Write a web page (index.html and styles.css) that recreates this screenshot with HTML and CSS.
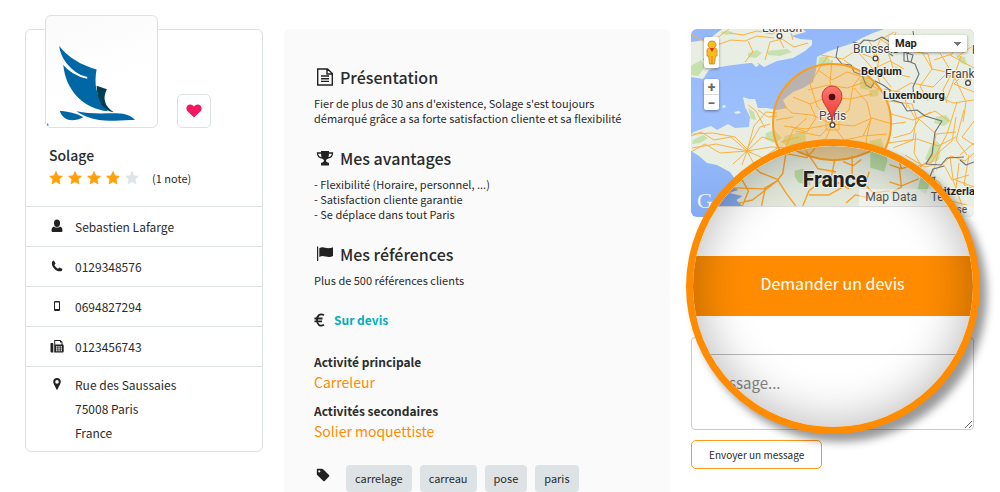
FILE: index.html
```html
<!DOCTYPE html>
<html lang="fr">
<head>
<meta charset="utf-8">
<meta name="viewport" content="width=device-width, initial-scale=1">
<title>Solage</title>
<link rel="stylesheet" href="styles.css">
</head>
<body>
<main class="page">
  <section class="card">
    <header class="card-head">
      <div class="brand">
        <div class="logo">
          <svg viewBox="0 0 113 113" role="img" aria-label="Solage">
            <path fill="#0067a6" d="M13.500 30.500C22 42 36 50 51.500 54.500C49 68 50 82 63 97C38 94 20 76 17.500 49C24 57 32 61 41 63C27 57 15 45 13.500 30.500Z"/>
            <path fill="none" stroke="#fff" stroke-width="2" d="M16 47C24 56 31 61 42 63"/>
            <path fill="#0067a6" d="M31 97C44 100 59 99 72 99C81 99 88 102 90.500 106C80 105 68 108 54 106C44 104 37 101 31 97ZM14 96.500C22 97 31 99 38 103C30 107 18 109 14 96.500Z"/>
            <path fill="#003e52" d="M51.500 71L62 74.500C57 84 60 92 69 98C59 97 52 88 51.500 71Z"/>
            <path fill="#2d8bc3" d="M1 109l2 2-2 1z"/>
          </svg>
        </div>
        <button class="like" type="button" aria-label="Ajouter aux favoris">
          <svg viewBox="0 0 16 14" width="16" height="14"><path fill="#f2185f" d="M8 13.500L1.500 7.300C-.8 4.800.6.6 4.200.6C6 .6 7.300 1.600 8 2.800C8.700 1.600 10 .6 11.800.6C15.400.6 16.800 4.800 14.500 7.300Z"/></svg>
        </button>
      </div>
      <h1 class="name">Solage</h1>
      <div class="rating">
        <svg class="stars" viewBox="0 0 90 14" width="90" height="14" role="img" aria-label="4 sur 5">
          <defs><path id="star" d="M7 .6l1.900 4.200 4.500.5-3.400 3 1 4.600L7 10.600l-4 2.300 1-4.600-3.400-3 4.500-.5z" stroke-width=".8" stroke-linejoin="round"/></defs>
          <g fill="#ff9f0a" stroke="#ff9f0a"><use href="#star"/><use href="#star" x="19"/><use href="#star" x="38"/><use href="#star" x="57"/></g>
          <use href="#star" x="76" fill="#dfe3e6" stroke="#dfe3e6"/>
        </svg>
        <span class="votes">(1 note)</span>
      </div>
    </header>
    <ul class="contact">
      <li><svg viewBox="0 0 14 14"><ellipse cx="7" cy="4.200" rx="3" ry="3.700"/><path d="M4 7.400C1.800 8 1.500 10 1.500 11.500C1.500 12.500 2.200 13 3 13H11C11.800 13 12.500 12.500 12.500 11.500C12.500 10 12.200 8 10 7.400C8.500 9 5.500 9 4 7.400Z"/></svg><span>Sebastien Lafarge</span></li>
      <li><svg viewBox="0 0 14 14"><path d="M2.200 2.400L3.800 1.600L5.600 4.600L4.400 6C5 7.400 6.400 8.900 8 9.700L9.400 8.500L12.500 10.100L11.700 12C7 14 .2 7.400 2.200 2.400Z"/></svg><span>0129348576</span></li>
      <li><svg viewBox="0 0 14 14"><path fill-rule="evenodd" d="M5 2H9Q10 2 10 3V11Q10 12 9 12H5Q4 12 4 11V3Q4 2 5 2ZM5 3.500V10H9V3.500Z"/></svg><span>0694827294</span></li>
      <li><svg viewBox="0 0 14 14"><path fill-rule="evenodd" d="M1 4H2.500Q3.300 4 3.300 4.800V13.500H1.500Q.5 13.500.5 12.500V5Q.5 4 1 4ZM4.200 1H10.500L12.500 3V5.300Q13.700 5.500 13.700 6.500V12.500Q13.700 13.500 12.700 13.500H4.200ZM5.200 2V5.500H11.500V3.500H10V2ZM6 7.200V8.400H7.500V7.200ZM8.300 7.200V8.400H9.800V7.200ZM10.600 7.200V8.400H12V7.200ZM6 9.200V10.400H7.500V9.200ZM8.300 9.200V10.400H9.800V9.200ZM10.600 9.200V10.400H12V9.200ZM6 11.200V12.300H7.500V11.200ZM8.300 11.200V12.300H9.800V11.200ZM10.600 11.200V12.300H12V11.200Z"/></svg><span>0123456743</span></li>
      <li class="address"><svg viewBox="0 0 14 14"><path fill-rule="evenodd" d="M7 1C4.700 1 3.200 2.700 3.200 4.800C3.200 7 5 8.600 6.200 12Q7 13.500 7.800 12C9 8.600 10.800 7 10.800 4.800C10.800 2.700 9.300 1 7 1ZM7 3.100A1.800 1.800 0 1 1 7 6.700A1.800 1.800 0 1 1 7 3.100Z"/></svg><span>Rue des Saussaies<br>75008 Paris<br>France</span></li>
    </ul>
  </section>

  <article class="about">
    <section class="block">
      <h2><svg viewBox="0 0 18 18"><path fill="none" stroke="#222" stroke-width="1.400" d="M1.700 1H11.500L16.300 5.500V17H1.700ZM11 1V6H16M5 8H13M5 10.700H13M5 13.400H13"/></svg>Présentation</h2>
      <p>Fier de plus de 30 ans d'existence, Solage s'est toujours<br>démarqué grâce a sa forte satisfaction cliente et sa flexibilité</p>
    </section>
    <section class="block">
      <h2><svg viewBox="0 0 18 18"><path d="M5 2H13V4C13 8 12 10 10 11C10 13 11 13.200 13 14V16.500H5V14C7 13.200 8 13 8 11C6 10 5 8 5 4Z"/><path fill="none" stroke="#222" stroke-width="1.300" d="M5 4H1.500C1.500 7 3.500 9 7 9M13 4H16.500C16.500 7 14.500 9 11 9"/></svg>Mes avantages</h2>
      <p>- Flexibilité (Horaire, personnel, ...)<br>- Satisfaction cliente garantie<br>- Se déplace dans tout Paris</p>
    </section>
    <section class="block">
      <h2><svg viewBox="0 0 18 18"><path d="M1 1.500H2.200V16H1ZM3.300 3.200C8 .5 10 5 17 2.300V11C11 14 8 9 3.300 12Z"/></svg>Mes références</h2>
      <p>Plus de 500 références clients</p>
    </section>
    <p class="price"><svg viewBox="0 0 12 14" width="12" height="14"><path fill="none" stroke="#222" stroke-width="1.800" d="M10 2.200C6 0 3 2.500 3 7C3 11.500 6 14 10 11.800M.5 5.500H8.500M.5 8.300H8"/></svg><span>Sur devis</span></p>
    <dl class="jobs">
      <dt>Activité principale</dt><dd>Carreleur</dd>
      <dt>Activités secondaires</dt><dd>Solier moquettiste</dd>
    </dl>
    <div class="tags">
      <svg viewBox="0 0 14 14" width="14" height="14" aria-hidden="true"><path fill-rule="evenodd" d="M.8 1.500Q.8.800 1.500.800H6Q6.600.8 7.100 1.300L13 7Q13.700 7.700 13 8.400L8.700 12.900Q8 13.500 7.300 12.900L1.400 7.200Q.8 6.700.8 6ZM3.300 2.200A1.100 1.100 0 1 0 3.310 2.200Z"/></svg>
      <ul><li>carrelage</li><li>carreau</li><li>pose</li><li>paris</li></ul>
    </div>
  </article>

  <aside class="side">
    <div class="map">
      <svg class="map-art" viewBox="691 29 283 188" preserveAspectRatio="xMidYMid slice" role="img" aria-label="Carte de France">
        <defs>
          <linearGradient id="pin" x1="0" y1="0" x2="0" y2="1"><stop offset="0" stop-color="#ff776d"/><stop offset="1" stop-color="#e8352e"/></linearGradient>
          <linearGradient id="sea" x1="0" y1="0" x2="0" y2="1"><stop offset="0" stop-color="#93b7f8"/><stop offset=".5" stop-color="#9dc0fd"/><stop offset="1" stop-color="#84abf2"/></linearGradient>
        </defs>
        <rect x="691" y="29" width="283" height="188" fill="url(#sea)"/>
        <g fill="#e8eee3">
          <path d="M691 42L705 40L713 36L722 29H803L806 32L791 36L800 39L812 40L812 45L805 51L793 58L777 61L764 67L758 63L750 63L733 65L720 67L709 70L703 79L691 77Z"/>
          <path d="M974 29H884L873 33L862 38L853 43L838 48L827 52L817 57L816 70L813 82L803 88L793 92L783 100L787 108L777 110L767 108L758 108L755 99L749 99L743 97L745 107L750 117L749 127L735 128L728 124L717 130L711 126L705 128L693 132L691 136V151L699 156L707 163L717 165L730 172L743 190L733 200L745 217H974Z"/>
          <path d="M752 63l4-2 3 4-3 2zM722 106l3-1 1 2-3 1zM734 112l5-1 2 2-5 1z"/>
        </g>
        <g fill="#c6e0ae">
          <path d="M691 66l10-6 4 7-7 9-7-1zM748 53l9-3 5 3-6 5-8-1zM767 51l20-2 5 3-12 4-12-1zM720 32l9-1 5 2-8 2zM748 108l6 4 2 8-5-1zM819 57l9-1 3 7-8 3-5-2zM860 79l10-3 5 9-8 5-7-2zM869 90l10-1-1 7-8 1zM766 133l8-3 8 8-8 5-9-4zM785 136l20-5 1 12-16 4-8-4zM870 141l11-3 4 14-5 6-4 15-9-2 2-17zM936 117l10-2 5 6-7 5-10-3zM930 147l7-6 4 5-2 14-9 3-5-4zM693 140l10-5 5 3-8 5-8 1zM895 66l5 3-1 8-4-2zM956 55l9 2 2 8-6-2zM791 170l10 3-1 13-8-3z"/>
        </g>
        <g fill="none" stroke="#fcb040" stroke-width="1" stroke-linejoin="round">
          <path d="M691 34l12 7 14-3 12-9M729 33l14 2 14-4 15 3 10-5M703 60l14-15 14-5 14 1 12-5 17 2M745 62l8-10-5-11M765 60l5-18 12-3 12 8 14-4M782 30l-2 10 4 8M790 30l3 10"/>
          <path d="M691 136l10-4 13 8 17-3 16 14 15-14 14 4M691 152l14-8 15 9 27-2 8 15 13 10M693 134l20-1 22 4 12 12 13-22 10-3M747 151l-31-7-24 4M747 151l-14 13M747 151l7-25 12-14 11 1M747 151l16 7 14-10M747 151l24-4 20 1M747 151l-5 14M758 110l10 7 9-1M748 105l8 6 9 17"/>
          <path d="M832 124l-20-9-20-2-9-8M832 124l-15-18-7-22 11-18 7-10M832 124l5-20-7-22 2-22M832 124l17-14 4-24 14-18M832 124l22 2 18-8 20 6 14-2M832 124l-8 20-22 6M832 124l12 16 20 10M832 124l-26 5-22-3M832 124l-12 12-25-5M793 97l17 7 6 14-9 14-16-5M808 90l20-5 19 3 18-6 15 8M818 70l14 10 15-8 22 7M810 104l18-7 22 2 22-5M854 88l13 14 4 17-8 17-18 4M871 118l-5 23 5 14M808 144l17-5 16 9 18-4 16 8M863 136l24-2M807 118l-14 12-7 17M826 117h13v13h-13zM776 120l17-3M781 142l18-5"/>
          <path d="M821 55l22 4 12-8 18 7 7-18 14-8M844 60l15 11 16-2 5 14M858 52l15 17 17-8 14 8M868 39l11 20-2 10 14 18M880 39l17 11 12-4M896 32l-8 20 7 22 15 3M884 89l20 4 3 15M888 96l23-13 22 4 12-12 26 5M910 51l18 3 4 15 19 4M918 45l14 24-12 17 8 15M934 60l18-6 4-14M940 53l12 20-9 17 4 13M955 77l-8 21-24-5M968 70l-14 14 20 8M936 95l17 8 21-3M961 56l-7 20 12 26-3 20M950 55l24 13M974 45l-17 12"/>
          <path d="M888 101l24 3 5 15 18-8 14 10M891 114l22 6 18-8M893 138l18-5 8-14M908 105l8 15-3 20-20 8M919 119l17 15 20-2M916 133l-2 20 8 14M888 143l29-4 21 7 18-9M936 134l-4 23-12 10M956 117l-4 24-14 12-5 20M957 102l-10 32-15 28-14 4M964 110l-8 30 11 15M974 121l-12 16 12 8M960 155l14-12M936 170l15-14 14 5 9-8M944 165l8 15 17-5M925 174l14 8 5 10M950 157l3 22 21 8M959 163l-3 25M969 155l-5 30 10 4M905 155l20 12 12-3M940 190l23 5 11-5M947 200l27 7M953 180l10 28"/>
        </g>
        <g fill="none" stroke="#6d7073" stroke-width="1.100" stroke-linejoin="round">
          <path d="M838 46l-2 11 6 7 9 1 3 7 8 3 4 10 5 3 4-7 8 4 7 5-1 9 13 4 5 8 10-1 8 6 17 5-7 11-3 22-6 10 15 1 6-7 17-1M853 42l7 2 4-4 10 1 8-4 8 5-3 10 6 4M913 31l2 14-8 9 1 7 7 3 4 10-6 13 1 16M904 52l9 3-2 7-7-1zM944 166l-11 3-4 10 6-2-4 11M960 160l6 5 8-3"/>
        </g>
        <circle cx="832" cy="123" r="59" fill="#ff9f1a" fill-opacity=".32" stroke="#fa9d1e" stroke-width="2"/>
        <g class="map-city">
          <text x="762" y="32">London</text><text x="853" y="53">Brussels</text><text x="819" y="120">Paris</text><text x="945" y="78">Frankfurt</text><text x="972" y="54">K</text>
        </g>
        <g class="map-country"><text x="861" y="75">Belgium</text><text x="883" y="99">Luxembourg</text><text x="929" y="195">Switzerland</text></g>
        <g fill="#fff" stroke="#444" stroke-width="1.300"><circle cx="779.500" cy="36" r="2.400"/><circle cx="875.500" cy="58.500" r="2.400"/><circle cx="968" cy="83" r="2.400"/><circle cx="832.500" cy="125" r="2.400"/></g>
        <path d="M832 122C831 109 822 105 822 96A10 10 0 0 1 842 96C842 105 833 109 832 122Z" fill="url(#pin)" stroke="#b92a24" stroke-width=".8"/><circle cx="832" cy="97" r="3.300" fill="#4d0d0d"/>
        <rect x="928" y="205" width="46" height="12" fill="#f4f4f4" fill-opacity=".75"/>
        <text class="map-terms" x="951" y="213">use</text>
        <text class="map-logo" x="697" y="208">G</text>
      </svg>
      <button class="pegman" type="button" aria-label="Street View"><svg viewBox="0 0 12 26" width="12" height="26"><path fill="#fdbb1c" stroke="#c98516" stroke-width=".8" d="M6 1A3.600 3.600 0 0 1 8.500 7.500Q11 8.500 11 10V16H9.500L8.500 24H3.500L2.500 16H1V10Q1 8.500 3.500 7.500A3.600 3.600 0 0 1 6 1Z"/><path fill="#d33920" d="M3.500 8H8.500L6 12Z"/><path stroke="#c98516" d="M6 16V24"/></svg></button>
      <div class="zoomer"><button type="button" aria-label="Zoom avant">+</button><button type="button" aria-label="Zoom arrière">−</button></div>
      <select class="map-type" aria-label="Type de carte"><option>Map</option><option>Satellite</option></select>
    </div>

    <form class="message">
      <textarea aria-label="Message"></textarea>
      <button class="send" type="button">Envoyer un message</button>
    </form>

    <div class="lens">
      <svg class="lens-map" viewBox="693 147 278 60" preserveAspectRatio="xMidYMax slice" aria-hidden="true">
        <rect x="693" y="147" width="278" height="60" fill="#e2e9db"/>
        <path fill="#83a9ec" d="M693 147L726 176L733 182L728 186L738 191L729 194L742 197L736 201L742 207H693Z"/>
        <path fill="#b6d7a0" d="M794 172l8-2 8 5-1 12-11-3-4-6zM869 147h15l2 15-3 11-14-4zM920 175l9 8-5 12-8-5zM731 168l7 3-5 3z"/>
        <g fill="none" stroke="#fba22a" stroke-width="1.400" stroke-linejoin="round">
          <path d="M786 150l-4 25-5 6 9 14 9 12M778 181l-15 9-30-1M778 181l-18-7-14-12M778 181l-26 20-13 3M765 188l-4 19M740 178l8 14-6 15M752 170l-8 6M786 155l20 4 8-9M805 152l12 18 18 3M834 160l-4 20M808 192l18-14 22 12M808 192l-6 15M808 196h20l14-8M851 157v22M842 163l10 4 8-6M868 173l-4 13 8 8 16-2M888 166l12 4 18-6M898 170l2 18-10 6M897 160l3 10M888 183l12 4 17-7M917 165l4 14 10 8M873 198l12 5M845 204l9-8 14 3"/>
        </g>
        <path fill="#ff9f1a" fill-opacity=".35" stroke="#fa9d1e" stroke-width="2" d="M784 145Q832 178 882 145"/>
        <path fill="#fff" fill-opacity=".5" d="M858 190H971V207H858Z"/>
        <text class="lens-country" x="802" y="188">France</text>
        <text class="lens-terms" x="864" y="202">Map Data</text><text class="lens-terms" x="929" y="202">Terms</text>
      </svg>
      <button class="quote" type="button">Demander un devis</button>
      <div class="lens-field">Message...</div>
    </div>
  </aside>
</main>
</body>
</html>
```
FILE: styles.css
```css
* { box-sizing: border-box; }

body {
  margin: 0;
  background: #fff;
  color: #2b2b2b;
  font-family: "Noto Sans CJK SC", "Noto Sans", sans-serif;
  font-size: 12px;
}

h1, h2, p, ul, dl, dd { margin: 0; padding: 0; }
ul { list-style: none; }
button, textarea, select { font-family: inherit; color: inherit; }
svg { flex: none; }

.page {
  display: grid;
  grid-template-columns: 238fr 386fr 283fr;
  gap: 21px;
  align-items: start;
  padding: 29px 26px 0 25px;
}

/* Business card */
.card { border: 1px solid #dce1e3; border-radius: 6px; }
.card-head { padding: 0 19px 16px 23px; }
.brand { display: flex; align-items: flex-end; gap: 19px; margin: -15px 0 0 -4px; }
.logo {
  width: 113px;
  height: 113px;
  border: 1px solid #dce1e3;
  border-radius: 6px;
  background: linear-gradient(160deg, #fafafa, #fff 60%);
  overflow: hidden;
}
.logo svg { display: block; width: 100%; height: 100%; }
.like {
  display: grid;
  place-items: center;
  width: 34px;
  height: 34px;
  padding: 0;
  border: 1px solid #dce1e3;
  border-radius: 5px;
  background: #fff;
}
.name { margin-top: 16px; font-size: 14px; line-height: 22px; font-weight: 500; }
.rating { display: flex; align-items: center; gap: 13px; height: 24px; }
.votes { font-size: 11px; }

.contact li {
  display: flex;
  align-items: flex-start;
  gap: 11px;
  padding: 8px 24px;
  border-top: 1px solid #dce1e3;
  line-height: 23px;
}
.contact svg { width: 14px; height: 14px; margin-top: 4px; fill: #222; }
.contact .address { padding: 6px 24px; line-height: 24px; }

/* Presentation */
.about {
  padding: 36px 30px 0;
  border-radius: 5px 5px 0 0;
  background: #fafafa;
}
.block { margin-bottom: 20px; }
.block h2 {
  display: flex;
  align-items: center;
  gap: 6px;
  padding-left: 2px;
  font-size: 16px;
  line-height: 24px;
  font-weight: 500;
}
.block h2 svg { width: 18px; height: 18px; fill: #222; }
.block p { margin-top: 7px; font-size: 11px; line-height: 15px; }
.price {
  display: flex;
  align-items: center;
  gap: 8px;
  margin: 22px 0;
  line-height: 20px;
  font-size: 12px;
  font-weight: 700;
  color: #00acc1;
}
.jobs dt { font-size: 12px; line-height: 20px; font-weight: 700; }
.jobs dd { margin-bottom: 9px; font-size: 14px; line-height: 20px; color: #ff8c00; }
.tags { display: flex; gap: 16px; margin-top: 24px; padding-left: 2px; }
.tags svg { margin-top: 3px; fill: #222; }
.tags ul { display: flex; gap: 8px; }
.tags li {
  padding: 0 9px;
  border-radius: 4px;
  background: #dde2e5;
  font-size: 11px;
  line-height: 27px;
}

/* Map */
.side { position: relative; }
.map {
  position: relative;
  border-radius: 6px;
  overflow: hidden;
}
.map-art { display: block; width: 100%; height: auto; aspect-ratio: 283 / 188; }
.map-art text, .lens-map text {
  font-family: Roboto, sans-serif;
  paint-order: stroke;
  stroke: #f3f4ec;
  stroke-width: 2px;
  stroke-linejoin: round;
}
.map-city { font-size: 12px; fill: #444; }
.map-country { font-size: 11px; font-weight: 700; fill: #222; }
.map-art .map-terms { font-size: 10px; fill: #555; stroke: none; }
.map-art .map-logo {
  font-family: "Liberation Serif", serif;
  font-size: 22px;
  fill: #fff;
  fill-opacity: .85;
  stroke: none;
}
.pegman, .zoomer, .map-type {
  position: absolute;
  border: 0;
  border-radius: 2px;
  background: #fff;
  box-shadow: 0 1px 3px rgba(0, 0, 0, .4);
}
.pegman { display: grid; place-items: center; left: 13px; top: 8px; width: 15px; height: 31px; padding: 0; }
.zoomer { display: grid; left: 13px; top: 50px; width: 15px; }
.zoomer button {
  height: 15px;
  padding: 0;
  border: 0;
  background: none;
  font: 700 14px/14px Roboto, sans-serif;
  color: #666;
}
.zoomer button + button { height: 16px; border-top: 1px solid #ddd; }
.map-type {
  right: 7px;
  top: 6px;
  width: 78px;
  height: 17px;
  padding: 0 6px;
  appearance: none;
  font: 700 11px/17px Roboto, sans-serif;
  color: #222;
  background:
    linear-gradient(to bottom left, #777 50%, transparent 50%) no-repeat right 9px center / 4px 4px,
    linear-gradient(to bottom right, #777 50%, transparent 50%) no-repeat right 5px center / 4px 4px,
    #fff;
}

/* Message form */
.message { margin-top: 120px; }
.message textarea {
  display: block;
  width: 100%;
  height: 93px;
  border: 1px solid #ccc;
  border-radius: 4px;
  background: #fff;
  resize: vertical;
}
.send {
  height: 29px;
  margin-top: 10px;
  padding: 0 17px;
  border: 1px solid #ff9a1f;
  border-radius: 5px;
  background: #fff;
  font-size: 10px;
}

/* Magnifier over the quote button */
.lens {
  position: absolute;
  left: 50%;
  top: 110px;
  display: flex;
  flex-direction: column;
  width: 294px;
  height: 295px;
  margin-left: -147px;
  border: 7px solid #ff8c00;
  border-radius: 50%;
  background: #fff;
  overflow: hidden;
  box-shadow: 7px 8px 9px rgba(0, 0, 0, .4);
}
.lens::after {
  content: "";
  position: absolute;
  inset: 0;
  border-radius: 50%;
  box-shadow: inset 0 0 48px 2px rgba(0, 0, 0, .28);
  pointer-events: none;
}
.lens-map { display: block; width: 100%; height: 61px; border-bottom: 1px solid #ddd; }
.lens-map .lens-country { font-size: 21px; font-weight: 700; fill: #222; }
.lens-map .lens-terms { font-size: 12px; fill: #555; stroke: none; }
.quote {
  height: 60px;
  margin: 49px 0 38px;
  padding: 0 0 6px;
  border: 0;
  background: #ff8c00;
  color: #fff;
  font-size: 16px;
}
.lens-field {
  flex: 1;
  padding: 16px 16px 0;
  border-top: 1px solid #bbb;
  font-size: 15px;
  line-height: 24px;
  color: #888;
}
```
